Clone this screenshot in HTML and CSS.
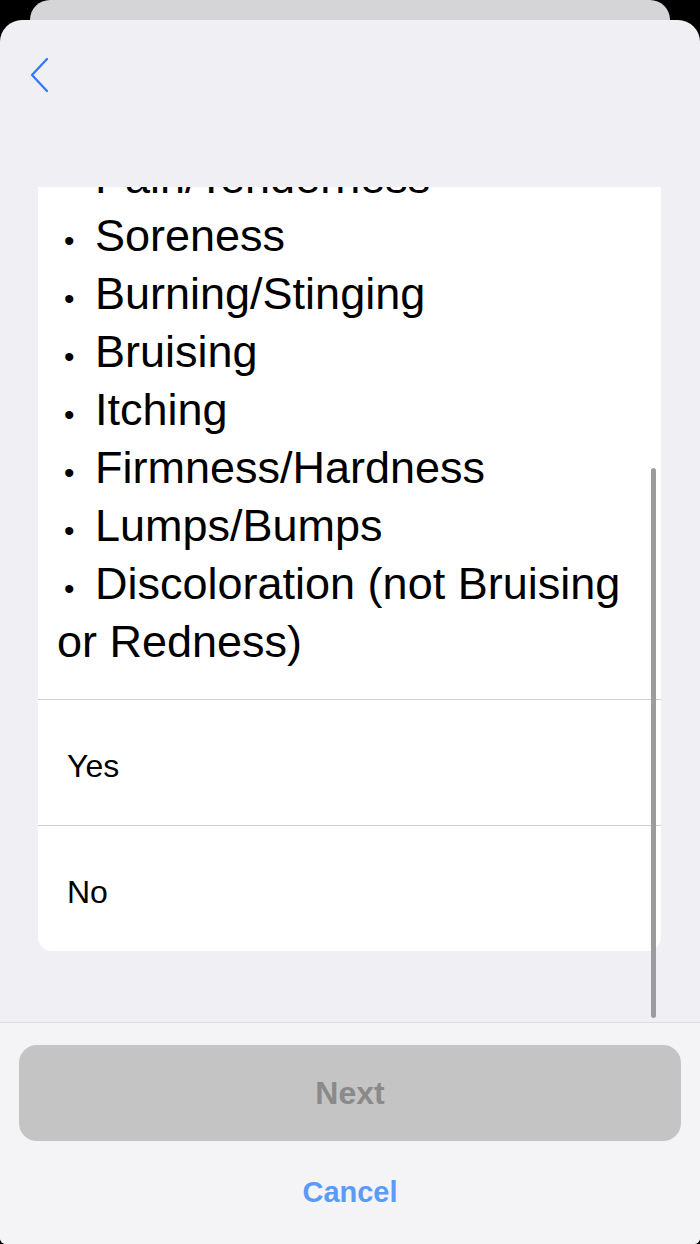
FILE: index.html
```html
<!DOCTYPE html>
<html lang="en">
<head>
<meta charset="utf-8">
<title>Symptoms</title>
<link rel="stylesheet" href="styles.css">
</head>
<body>
<div class="back-sheet"></div>
<main class="sheet">
  <header class="nav">
    <button class="back" aria-label="Back">
      <svg width="20" height="36" viewBox="0 0 20 36" aria-hidden="true">
        <path d="M18 2 L3 18 L18 34" fill="none" stroke="#3478f6" stroke-width="2.3" stroke-linecap="round" stroke-linejoin="round"/>
      </svg>
    </button>
  </header>
  <section class="scroll">
    <div class="card">
      <p class="symptoms"><span class="dot">•</span>Pain/Tenderness<br><span class="dot">•</span>Soreness<br><span class="dot">•</span>Burning/Stinging<br><span class="dot">•</span>Bruising<br><span class="dot">•</span>Itching<br><span class="dot">•</span>Firmness/Hardness<br><span class="dot">•</span>Lumps/Bumps<br><span class="dot">•</span>Discoloration (not Bruising or Redness)</p>
      <div class="option">Yes</div>
      <div class="option">No</div>
    </div>
    <div class="scrollbar"></div>
  </section>
  <footer class="footer">
    <button class="next" disabled>Next</button>
    <div class="cancel-wrap"><button class="cancel">Cancel</button></div>
  </footer>
</main>
</body>
</html>
```

FILE: styles.css
```css
* { box-sizing: border-box; }
html, body {
  margin: 0;
  padding: 0;
  background: #000;
}
body {
  width: 700px;
  height: 1244px;
  overflow: hidden;
  font-family: "Liberation Sans", Arial, sans-serif;
  display: flex;
  flex-direction: column;
}
.back-sheet {
  height: 20px;
  margin: 0 30px;
  background: #d5d5d8;
  border-radius: 20px 20px 0 0;
  flex: none;
}
.sheet {
  flex: 1;
  display: flex;
  flex-direction: column;
  background: #efeff4;
  border-radius: 22px 22px 6px 6px;
  overflow: hidden;
}
.nav {
  height: 167px;
  flex: none;
  padding: 36px 0 0 28px;
}
.back {
  border: 0;
  background: none;
  padding: 0;
  width: 22px;
  height: 38px;
  display: flex;
  align-items: center;
  justify-content: center;
}
.scroll {
  flex: 1;
  position: relative;
  overflow: hidden;
}
.card {
  margin: -38px 39px 0 38px;
  background: #fff;
  border-radius: 0 0 14px 14px;
}
.symptoms {
  margin: 0;
  padding: 0 19px 28px 19px;
  font-size: 45px;
  line-height: 58px;
  color: #000;
}
.dot {
  display: inline-block;
  width: 38px;
  padding-left: 7px;
  font-size: 30px;
  line-height: 1;
}
.option {
  height: 126px;
  border-top: 1px solid #cfcfd2;
  padding: 8px 0 0 29px;
  display: flex;
  align-items: center;
  font-size: 32px;
  color: #000;
}
.scrollbar {
  position: absolute;
  left: 651px;
  top: 281px;
  width: 5px;
  height: 550px;
  border-radius: 3px;
  background: #9c9c9e;
}
.footer {
  height: 222px;
  flex: none;
  background: #f4f4f7;
  border-top: 1px solid #dedee2;
  display: flex;
  flex-direction: column;
  padding: 22px 19px 0;
}
.next {
  height: 96px;
  border: 0;
  border-radius: 18px;
  background: #c4c4c4;
  color: #8a8a8a;
  font-family: "Liberation Sans", Arial, sans-serif;
  font-weight: 700;
  font-size: 32px;
  flex: none;
}
.cancel-wrap {
  flex: 1;
  display: flex;
  align-items: center;
  justify-content: center;
}
.cancel {
  border: 0;
  background: none;
  color: #5a9bf6;
  font-family: "Liberation Sans", Arial, sans-serif;
  font-weight: 700;
  font-size: 29px;
  padding: 0;
}
```
